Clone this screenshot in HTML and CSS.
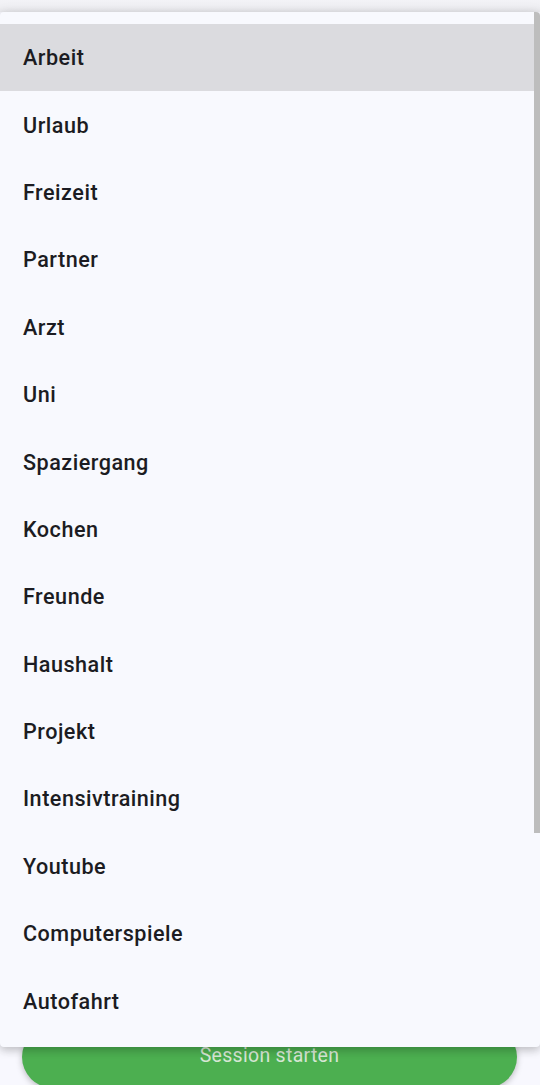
FILE: index.html
```html
<!DOCTYPE html>
<html lang="de">
<head>
<meta charset="utf-8">
<title>Kategorie</title>
<link rel="stylesheet" href="styles.css">
</head>
<body>
<div class="page">
  <div class="topbar"></div>
  <div class="spacer"></div>
  <div class="actions">
    <button class="start">Session starten</button>
  </div>
</div>
<div class="menu">
  <ul class="list">
    <li class="item active">Arbeit</li>
    <li class="item">Urlaub</li>
    <li class="item">Freizeit</li>
    <li class="item">Partner</li>
    <li class="item">Arzt</li>
    <li class="item">Uni</li>
    <li class="item">Spaziergang</li>
    <li class="item">Kochen</li>
    <li class="item">Freunde</li>
    <li class="item">Haushalt</li>
    <li class="item">Projekt</li>
    <li class="item">Intensivtraining</li>
    <li class="item">Youtube</li>
    <li class="item">Computerspiele</li>
    <li class="item">Autofahrt</li>
  </ul>
  <div class="scrollbar"></div>
</div>
</body>
</html>
```

FILE: styles.css
```css
html, body {
  margin: 0;
  padding: 0;
}
body {
  width: 540px;
  height: 1085px;
  overflow: hidden;
  background: #f8f8fe;
  font-family: Roboto, "Noto Sans", sans-serif;
  position: relative;
}
.page {
  height: 1085px;
  display: flex;
  flex-direction: column;
}
.topbar {
  height: 12px;
  background: linear-gradient(#f3f3f7, #ececf0);
}
.spacer {
  flex: 1;
}
.actions {
  padding: 0 23px 0 22px;
  margin-bottom: -3px;
}
.start {
  display: block;
  width: 100%;
  height: 62px;
  border: none;
  border-radius: 31px;
  background: #4caf50;
  color: #d6e6d4;
  font-family: Roboto, sans-serif;
  font-size: 19.5px;
  letter-spacing: 0.3px;
  padding: 0 0 4px;
  box-shadow: 0 2px 6px rgba(0, 0, 0, 0.25);
}
.menu {
  position: absolute;
  top: 12px;
  left: 0;
  width: 540px;
  height: 1035px;
  box-sizing: border-box;
  background: #f8f9fe;
  border-radius: 4px;
  box-shadow: 0 3px 10px rgba(0, 0, 0, 0.22), 0 0 14px rgba(0, 0, 0, 0.06);
  overflow: hidden;
}
.list {
  list-style: none;
  margin: 0;
  padding: 12px 0;
}
.item {
  height: 67.4px;
  display: flex;
  align-items: center;
  padding-left: 23px;
  box-sizing: border-box;
  font-size: 21.6px;
  letter-spacing: 0.5px;
  font-weight: 500;
  color: #1c1c22;
}
.item.active {
  background: #dbdbdf;
}
.scrollbar {
  position: absolute;
  top: 0;
  right: 0;
  width: 6px;
  height: 821px;
  background: #bdbdbd;
}
```
